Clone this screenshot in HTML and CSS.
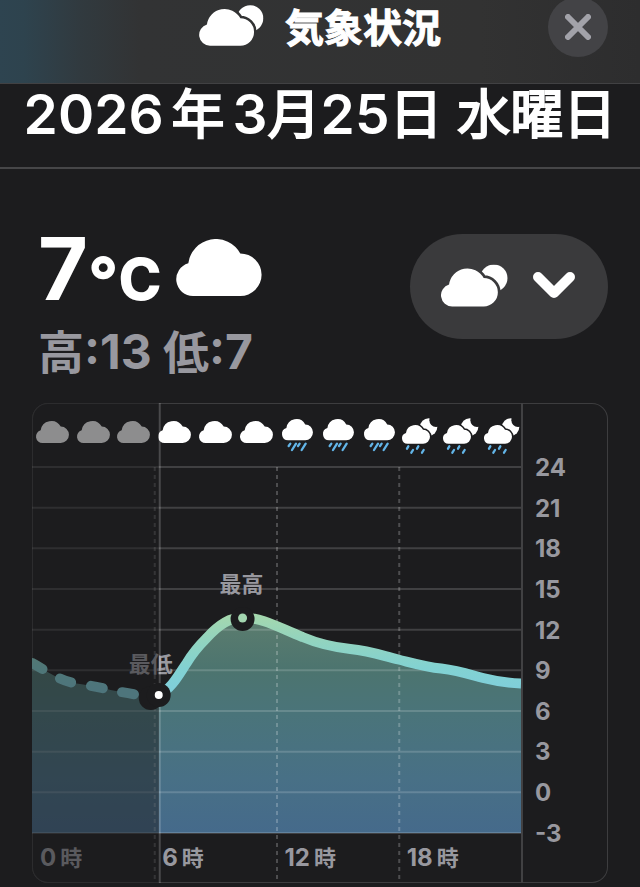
FILE: index.html
```html
<!DOCTYPE html>
<html lang="ja">
<head>
<meta charset="utf-8">
<meta name="viewport" content="width=device-width, initial-scale=1">
<title>気象状況</title>
<link rel="stylesheet" href="styles.css">
</head>
<body>
<svg class="defs" width="0" height="0" aria-hidden="true">
  <defs>
    <path id="cloud-shape" d="M50 170A50 50 0 0 1 36 72A83 83 0 0 1 191 43A63.500 63.500 0 0 1 191 170Z"/>
    <mask id="sun-gap" maskUnits="userSpaceOnUse" x="0" y="0" width="194" height="123">
      <rect width="194" height="123" fill="#fff"/>
      <use href="#cloud-shape" transform="translate(0 12) scale(.647)" fill="#000" stroke="#000" stroke-width="24"/>
    </mask>
    <mask id="moon-gap" maskUnits="userSpaceOnUse" x="0" y="-4" width="112" height="112">
      <rect y="-4" width="112" height="112" fill="#fff"/>
      <use href="#cloud-shape" transform="translate(0 18) scale(.33)" fill="#000" stroke="#000" stroke-width="28"/>
      <circle cx="102" cy="4" r="20" fill="#000"/>
    </mask>
    <symbol id="cloud" viewBox="0 0 255 170" overflow="visible"><use href="#cloud-shape"/></symbol>
    <symbol id="cloud-sun" viewBox="0 0 194 123" overflow="visible">
      <circle cx="153" cy="40" r="39.500" mask="url(#sun-gap)"/>
      <use href="#cloud-shape" transform="translate(0 12) scale(.647)"/>
    </symbol>
    <symbol id="rain" viewBox="0 0 93 96" overflow="visible">
      <use href="#cloud-shape" transform="scale(.365 .376)"/>
      <path class="drops" d="M25 74l-5 7M42 74l-12 19M53 74l-5 7M71 74l-12 19"/>
    </symbol>
    <symbol id="rain-night" viewBox="0 0 108 108" overflow="visible">
      <circle cx="80" cy="24" r="26" mask="url(#moon-gap)"/>
      <use href="#cloud-shape" transform="translate(0 18) scale(.33)"/>
      <path class="drops" d="M19 82l-4 7M33 93l-5 8M49 82l-4 7M65 93l-5 8"/>
    </symbol>
  </defs>
</svg>

<header class="topbar">
  <h1 class="title"><svg class="title-icon"><use href="#cloud-sun"/></svg>気象状況</h1>
  <button class="close" type="button" aria-label="閉じる">
    <svg viewBox="0 0 26 26"><path d="M3 3L23 23M23 3L3 23"/></svg>
  </button>
</header>
<h2 class="date"><span class="num">2026</span><span class="spaced">年</span><span class="num">3</span>月<span class="num">25</span>日 水曜日</h2>

<main class="content">
  <section class="summary">
    <div>
      <p class="now"><span class="temp">7</span><span class="degree">°</span><span class="unit">C</span><svg class="now-icon"><use href="#cloud"/></svg></p>
      <p class="range"><i>高</i>:13 <i>低</i>:7</p>
    </div>
    <button class="picker" type="button" aria-label="表示項目">
      <svg class="picker-icon"><use href="#cloud-sun"/></svg>
      <svg class="chevron" viewBox="0 0 42 27"><path d="M5 5L21 21L37 5"/></svg>
    </button>
  </section>

  <section class="chart" aria-label="気温">
    <div class="plot">
      <svg class="graph" viewBox="0 0 490 480" preserveAspectRatio="none" aria-hidden="true">
        <defs>
          <linearGradient id="line" gradientUnits="userSpaceOnUse" x1="0" y1="208" x2="0" y2="284">
            <stop offset="0" stop-color="#a8d9ab"/>
            <stop offset=".35" stop-color="#94d4bd"/>
            <stop offset=".75" stop-color="#82d2d2"/>
            <stop offset="1" stop-color="#80cfda"/>
          </linearGradient>
          <linearGradient id="area" gradientUnits="userSpaceOnUse" x1="0" y1="214" x2="0" y2="430">
            <stop offset="0" stop-color="#5c7d6e"/>
            <stop offset=".25" stop-color="#4c746f"/>
            <stop offset=".45" stop-color="#4a747a"/>
            <stop offset=".75" stop-color="#487086"/>
            <stop offset="1" stop-color="#456a8b"/>
          </linearGradient>
        </defs>
        <path fill="url(#area)" d="M0 260C20 271 30 279 48 281C75 285 90 291 120 293L128 291C140 286 148 270 155 260C161 250 167 243 175 235C184 225 196 214.500 210 214.500C232 214.500 248 225 271 234C290 242 305 244.500 319 246C340 248 352 253 367 256.500C385 261 395 264 410 265.500C430 268 440 272 452 275C468 279 478 280 490 280.500V430H0Z"/>
        <path class="levels" d="M0 64H490M0 104.700H490M0 145.300H490M0 186H490M0 226.700H490M0 267.300H490M0 308H490M0 348.700H490M0 389.300H490M0 430H490"/>
        <path class="hours-grid" d="M123 64V478M245.500 64V478M368 64V478"/>
        <path class="past-line" d="M0 260C20 271 30 279 48 281C75 285 90 291 120 293"/>
        <path class="temp-line" d="M128 291C140 286 148 270 155 260C161 250 167 243 175 235C184 225 196 214.500 210 214.500C232 214.500 248 225 271 234C290 242 305 244.500 319 246C340 248 352 253 367 256.500C385 261 395 264 410 265.500C430 268 440 272 452 275C468 279 478 280 490 280.500"/>
        <circle class="halo" cx="211" cy="216" r="12"/>
        <circle cx="211" cy="215" r="4.500" fill="#a3d6b0"/>
        <text class="mark" x="210" y="189">最高</text>
        <text class="mark" x="119" y="269">最低</text>
      </svg>
      <div class="rows">
        <div class="icons">
          <svg><use href="#cloud"/></svg><svg><use href="#cloud"/></svg><svg><use href="#cloud"/></svg><svg><use href="#cloud"/></svg><svg><use href="#cloud"/></svg><svg><use href="#cloud"/></svg>
          <svg class="rain"><use href="#rain"/></svg><svg class="rain"><use href="#rain"/></svg><svg class="rain"><use href="#rain"/></svg>
          <svg class="night"><use href="#rain-night"/></svg><svg class="night"><use href="#rain-night"/></svg><svg class="night"><use href="#rain-night"/></svg>
        </div>
        <div class="hours"><span>0<i>時</i></span><span>6<i>時</i></span><span>12<i>時</i></span><span>18<i>時</i></span></div>
      </div>
      <div class="past"></div>
      <svg class="graph" viewBox="0 0 490 480" preserveAspectRatio="none" aria-hidden="true">
        <path class="now-line" d="M128 0V480"/>
        <circle class="halo" cx="119" cy="295" r="12"/>
        <circle class="halo" cx="127" cy="292" r="12"/>
        <circle cx="127" cy="292" r="4" fill="#fff"/>
      </svg>
    </div>
    <div class="scale"><span>24</span><span>21</span><span>18</span><span>15</span><span>12</span><span>9</span><span>6</span><span>3</span><span>0</span><span>-3</span></div>
  </section>
</main>
</body>
</html>
```
FILE: styles.css
```css
* { box-sizing: border-box; }
body {
  margin: 0;
  background: #1c1c1e;
  color: #fff;
  font-family: Inter, "Noto Sans CJK JP", sans-serif;
}
h1, h2, p { margin: 0; }
i { font-style: normal; }
button { border: 0; padding: 0; color: inherit; }
svg { fill: currentColor; flex: none; }
.defs { position: absolute; }

.topbar {
  display: grid;
  grid-template-columns: 60px 1fr 60px;
  height: 84px;
  padding: 0 32px;
  border-bottom: 1px solid #414143;
  background: linear-gradient(90deg, #2e4450 0, #2e434e 24px, #313a3f 80px, #323334 140px, #323232 75%, #2d2d2e 100%);
}
.title {
  grid-column: 2;
  display: flex;
  justify-content: center;
  gap: 21px;
  font-size: 39px;
  line-height: 55px;
  font-weight: 700;
  -webkit-text-stroke: 1px currentColor;
}
.title-icon { width: 65px; height: 41px; margin-top: 5px; }
.close {
  width: 60px;
  height: 60px;
  margin-top: -3px;
  border-radius: 50%;
  background: #434346;
  display: grid;
  place-items: center;
}
.close svg {
  width: 26px;
  fill: none;
  stroke: #a2a2a9;
  stroke-width: 6;
  stroke-linecap: round;
}

.date {
  height: 85px;
  border-bottom: 2px solid #464648;
  text-align: center;
  white-space: nowrap;
  font-size: 53px;
  line-height: 60px;
  font-weight: 400;
  -webkit-text-stroke: 2px currentColor;
}
.num { font-size: 55px; font-weight: 600; -webkit-text-stroke: 0; }
.spaced { margin: 0 8px; }

.content { padding: 65px 32px 4px; }
.summary {
  display: flex;
  justify-content: space-between;
  height: 169px;
  padding-left: 6px;
}
.now { display: flex; align-items: baseline; height: 86px; line-height: 70px; font-weight: 700; }
.temp { font-size: 86px; }
.degree { align-self: flex-start; margin-top: 11px; font-size: 66px; line-height: 70px; font-weight: 800; }
.unit { font-size: 58px; font-weight: 800; }
.now-icon { align-self: flex-start; width: 86px; height: 57px; margin: 5px 0 0 14px; }
.range { color: #98989f; font-size: 48px; line-height: 64px; font-weight: 700; }
.range i { font-size: 46px; }
.picker {
  display: flex;
  align-items: center;
  justify-content: center;
  gap: 25px;
  width: 198px;
  height: 105px;
  padding: 0 3px 3px 0;
  border-radius: 53px;
  background: #3a3a3c;
}
.picker-icon { width: 67px; height: 43px; }
.chevron { width: 42px; height: 27px; fill: none; stroke: #fff; stroke-width: 10; stroke-linecap: round; stroke-linejoin: round; }

.chart {
  display: grid;
  grid-template-columns: 1fr 85px;
  height: 480px;
  border-radius: 16px;
  overflow: hidden;
  box-shadow: inset 0 0 0 1px #3d3d3f;
}
.plot { display: grid; border-right: 2px solid #414143; }
.plot > * { grid-area: 1 / 1; min-width: 0; min-height: 0; }
.graph { width: 100%; height: 100%; }
.levels { fill: none; stroke: #fff; stroke-opacity: .16; stroke-width: 2; }
.hours-grid { fill: none; stroke: #fff; stroke-opacity: .22; stroke-width: 2; stroke-dasharray: 4 4; }
.past-line, .temp-line { fill: none; stroke: url(#line); stroke-width: 10; }
.past-line { stroke-linecap: round; stroke-dasharray: 12 20; }
.halo { fill: #1c1c1e; }
.mark { fill: #98989f; font-size: 22px; font-weight: 700; text-anchor: middle; }
.now-line { fill: none; stroke: #fff; stroke-opacity: .2; stroke-width: 2; }
.past { width: 26%; background: rgba(28, 28, 30, .5); }

.rows { display: flex; flex-direction: column; justify-content: space-between; }
.icons { display: grid; grid-template-columns: repeat(12, 1fr); place-items: center; height: 58px; }
.icons svg { width: 33px; height: 22px; overflow: visible; }
.icons .rain { width: 31px; height: 32px; margin: 6px 0 0 2px; }
.icons .night { width: 36px; height: 36px; margin: 10px 0 0 2px; }
.drops { fill: none; stroke: #62b5e8; stroke-width: 7; stroke-linecap: round; }
.hours { display: grid; grid-template-columns: repeat(4, 1fr); height: 50px; }
.hours span { padding-left: 8px; line-height: 50px; }
.hours i { font-size: 22px; margin-left: 4px; }
.hours, .scale { color: #98989f; font-size: 24px; font-weight: 700; }
.scale { display: grid; grid-template-rows: repeat(10, 1fr); align-items: center; padding: 45px 0 29px 12px; line-height: 24px; }
```
